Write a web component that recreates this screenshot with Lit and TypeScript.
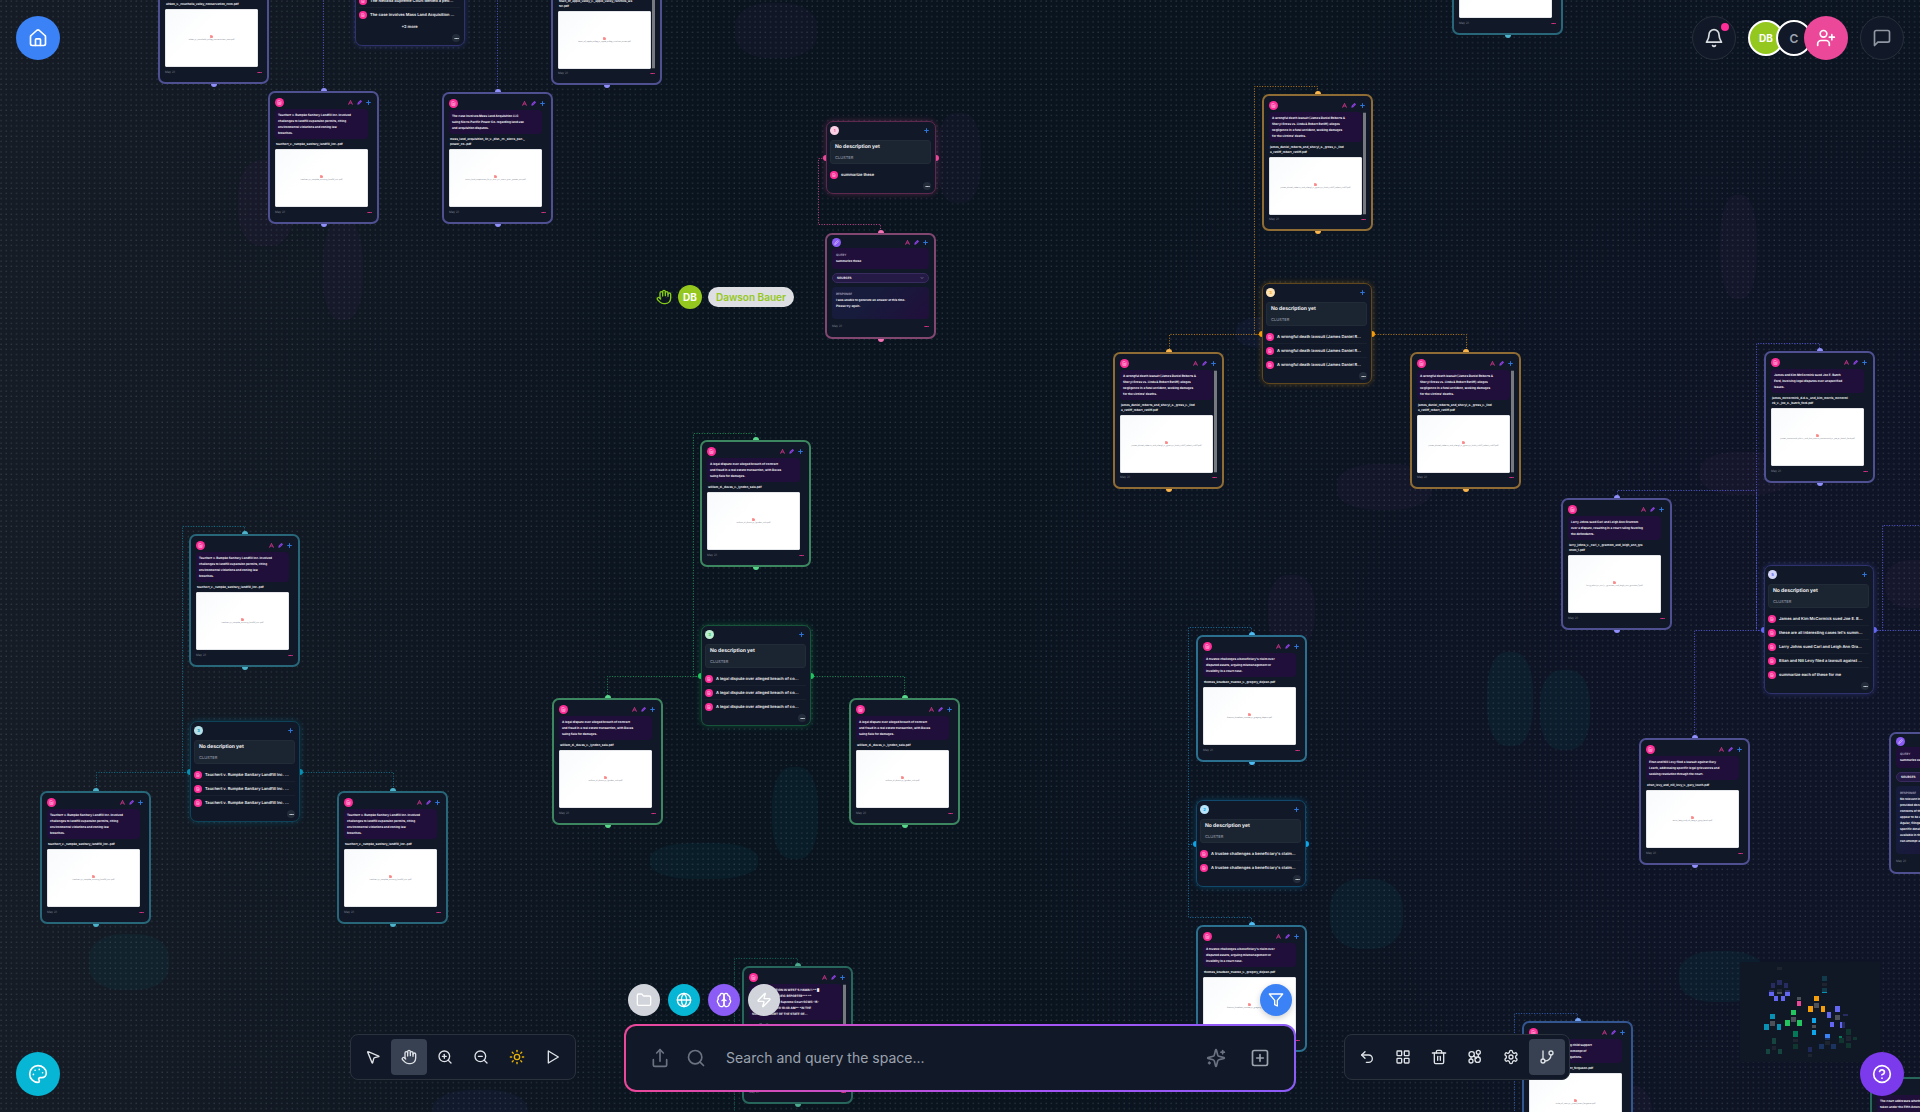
import { LitElement, html, svg, css, nothing } from "lit";
import { customElement, property } from "lit/decorators.js";
import { styleMap } from "lit/directives/style-map.js";
import { classMap } from "lit/directives/class-map.js";

const ICONS: Record<string, string[]> = {
  home: [
    "M15 21v-7a1 1 0 0 0-1-1h-4a1 1 0 0 0-1 1v7",
    "M3 10.5a2 2 0 0 1 .7-1.5l7-6.3a2 2 0 0 1 2.6 0l7 6.3a2 2 0 0 1 .7 1.5V19a2 2 0 0 1-2 2H5a2 2 0 0 1-2-2z",
  ],
  bell: [
    "M10.3 21a1.94 1.94 0 0 0 3.4 0",
    "M6 8a6 6 0 0 1 12 0c0 4.5 1.4 6.4 3 9H3c1.6-2.6 3-4.5 3-9",
  ],
  chat: ["M21 15a2 2 0 0 1-2 2H7l-4 4V5a2 2 0 0 1 2-2h14a2 2 0 0 1 2 2z"],
  userPlus: [
    "M16 21v-2a4 4 0 0 0-4-4H6a4 4 0 0 0-4 4v2",
    "M5 7a4 4 0 1 0 8 0a4 4 0 1 0-8 0",
    "M19 8v6",
    "M22 11h-6",
  ],
  palette: [
    "M12 2C6.5 2 2 6.5 2 12s4.5 10 10 10c.926 0 1.648-.746 1.648-1.688 0-.437-.18-.835-.437-1.125-.29-.289-.438-.652-.438-1.125a1.64 1.64 0 0 1 1.668-1.668h1.996c3.051 0 5.555-2.503 5.555-5.554C21.965 6.012 17.461 2 12 2z",
    "M13.5 6.5h.01",
    "M17.5 10.5h.01",
    "M8.5 7.5h.01",
    "M6.5 12.5h.01",
  ],
  help: [
    "M2 12a10 10 0 1 0 20 0a10 10 0 1 0-20 0",
    "M9.09 9a3 3 0 0 1 5.83 1c0 2-3 3-3 3",
    "M12 17h.01",
  ],
  cursor: [
    "M4.037 4.688a.495.495 0 0 1 .651-.651l16 6.5a.5.5 0 0 1-.063.947l-6.124 1.58a2 2 0 0 0-1.438 1.435l-1.579 6.126a.5.5 0 0 1-.947.063z",
  ],
  hand: [
    "M18 11V6a2 2 0 0 0-2-2a2 2 0 0 0-2 2",
    "M14 10V4a2 2 0 0 0-2-2a2 2 0 0 0-2 2v2",
    "M10 10.5V6a2 2 0 0 0-2-2a2 2 0 0 0-2 2v8",
    "M18 8a2 2 0 1 1 4 0v6a8 8 0 0 1-8 8h-2c-2.8 0-4.5-.86-5.99-2.34l-3.6-3.6a2 2 0 0 1 2.83-2.82L7 15",
  ],
  zoomIn: ["M3 11a8 8 0 1 0 16 0a8 8 0 1 0-16 0", "M21 21l-4.35-4.35", "M11 8v6", "M8 11h6"],
  zoomOut: ["M3 11a8 8 0 1 0 16 0a8 8 0 1 0-16 0", "M21 21l-4.35-4.35", "M8 11h6"],
  search: ["M3 11a8 8 0 1 0 16 0a8 8 0 1 0-16 0", "M21 21l-4.35-4.35"],
  sun: [
    "M8 12a4 4 0 1 0 8 0a4 4 0 1 0-8 0",
    "M12 2v2", "M12 20v2", "M4.93 4.93l1.41 1.41", "M17.66 17.66l1.41 1.41",
    "M2 12h2", "M20 12h2", "M6.34 17.66l-1.41 1.41", "M19.07 4.93l-1.41 1.41",
  ],
  play: ["M5 3l15 9-15 9z"],
  folder: ["M20 20a2 2 0 0 0 2-2V8a2 2 0 0 0-2-2h-7.9a2 2 0 0 1-1.69-.9L9.6 3.9A2 2 0 0 0 7.93 3H4a2 2 0 0 0-2 2v13a2 2 0 0 0 2 2z"],
  globe: [
    "M2 12a10 10 0 1 0 20 0a10 10 0 1 0-20 0",
    "M12 2a14.5 14.5 0 0 0 0 20 14.5 14.5 0 0 0 0-20",
    "M2 12h20",
  ],
  brain: [
    "M12 5a3 3 0 1 0-5.997.125 4 4 0 0 0-2.526 5.77 4 4 0 0 0 .556 6.588A4 4 0 1 0 12 18Z",
    "M12 5a3 3 0 1 1 5.997.125 4 4 0 0 1 2.526 5.77 4 4 0 0 1-.556 6.588A4 4 0 1 1 12 18Z",
    "M15 13a4.5 4.5 0 0 1-3-4 4.5 4.5 0 0 1-3 4",
  ],
  zap: ["M4 14a1 1 0 0 1-.78-1.63l9.9-10.2a.5.5 0 0 1 .86.46l-1.92 6.02A1 1 0 0 0 13 10h7a1 1 0 0 1 .78 1.63l-9.9 10.2a.5.5 0 0 1-.86-.46l1.92-6.02A1 1 0 0 0 11 14z"],
  filter: ["M22 3H2l8 9.46V19l4 2v-8.54z"],
  upload: ["M4 14v6a2 2 0 0 0 2 2h12a2 2 0 0 0 2-2v-6", "M16 6l-4-4-4 4", "M12 2v14"],
  sparkles: [
    "M9.94 15.5A2 2 0 0 0 8.5 14.06l-6.14-1.58a.5.5 0 0 1 0-.96L8.5 9.94A2 2 0 0 0 9.94 8.5l1.58-6.14a.5.5 0 0 1 .96 0L14.06 8.5A2 2 0 0 0 15.5 9.94l6.14 1.58a.5.5 0 0 1 0 .96L15.5 14.06a2 2 0 0 0-1.44 1.44l-1.58 6.14a.5.5 0 0 1-.96 0z",
    "M20 3v4", "M22 5h-4", "M4 17v2", "M5 18H3",
  ],
  squarePlus: ["M5 3h14a2 2 0 0 1 2 2v14a2 2 0 0 1-2 2H5a2 2 0 0 1-2-2V5a2 2 0 0 1 2-2z", "M8 12h8", "M12 8v8"],
  undo: ["M9 14L4 9l5-5", "M4 9h10.5a5.5 5.5 0 0 1 0 11H11"],
  grid: [
    "M4 3h5a1 1 0 0 1 1 1v5a1 1 0 0 1-1 1H4a1 1 0 0 1-1-1V4a1 1 0 0 1 1-1z",
    "M15 3h5a1 1 0 0 1 1 1v5a1 1 0 0 1-1 1h-5a1 1 0 0 1-1-1V4a1 1 0 0 1 1-1z",
    "M15 14h5a1 1 0 0 1 1 1v5a1 1 0 0 1-1 1h-5a1 1 0 0 1-1-1v-5a1 1 0 0 1 1-1z",
    "M4 14h5a1 1 0 0 1 1 1v5a1 1 0 0 1-1 1H4a1 1 0 0 1-1-1v-5a1 1 0 0 1 1-1z",
  ],
  trash: ["M2 6h20", "M19 6v14a2 2 0 0 1-2 2H7a2 2 0 0 1-2-2V6", "M8 6V4a2 2 0 0 1 2-2h4a2 2 0 0 1 2 2v2", "M10 11v6", "M14 11v6"],
  groups: [
    "M3 8a4 4 0 1 0 8 0a4 4 0 1 0-8 0",
    "M14 5a3 3 0 1 0 6 0a3 3 0 1 0-6 0",
    "M3 18a3 3 0 1 0 6 0a3 3 0 1 0-6 0",
    "M12 16a4 4 0 1 0 8 0a4 4 0 1 0-8 0",
    "M10 10l4 4",
    "M17 8v4",
    "M6 12v3",
  ],
  gear: [
    "M12.22 2h-.44a2 2 0 0 0-2 2v.18a2 2 0 0 1-1 1.73l-.43.25a2 2 0 0 1-2 0l-.15-.08a2 2 0 0 0-2.73.73l-.22.38a2 2 0 0 0 .73 2.73l.15.1a2 2 0 0 1 1 1.72v.51a2 2 0 0 1-1 1.74l-.15.09a2 2 0 0 0-.73 2.73l.22.38a2 2 0 0 0 2.73.73l.15-.08a2 2 0 0 1 2 0l.43.25a2 2 0 0 1 1 1.73V20a2 2 0 0 0 2 2h.44a2 2 0 0 0 2-2v-.18a2 2 0 0 1 1-1.73l.43-.25a2 2 0 0 1 2 0l.15.08a2 2 0 0 0 2.73-.73l.22-.39a2 2 0 0 0-.73-2.73l-.15-.08a2 2 0 0 1-1-1.74v-.5a2 2 0 0 1 1-1.74l.15-.09a2 2 0 0 0 .73-2.73l-.22-.38a2 2 0 0 0-2.73-.73l-.15.08a2 2 0 0 1-2 0l-.43-.25a2 2 0 0 1-1-1.73V4a2 2 0 0 0-2-2z",
    "M9 12a3 3 0 1 0 6 0a3 3 0 1 0-6 0",
  ],
  branch: ["M6 3v12", "M15 6a3 3 0 1 0 6 0a3 3 0 1 0-6 0", "M3 18a3 3 0 1 0 6 0a3 3 0 1 0-6 0", "M18 9a9 9 0 0 1-9 9"],
  alert: ["M12 3l9 17", "M12 3L3 20", "M7 14h10"],
  pencil: ["M4 20l2-6L17 3l4 4L10 18z"],
  plus: ["M12 3v18", "M3 12h18"],
  chevron: ["M6 9l6 6 6-6"],
  file: ["M6 3h9l4 4v14H6z", "M9 12h6", "M9 16h6"],
  dots: ["M4 12h3", "M11 12h3", "M18 12h3"],
};

const icon = (name: string, size: number, width = 2) => html`<svg
  width=${size} height=${size} viewBox="0 0 24 24" fill="none" stroke="currentColor"
  stroke-width=${width} stroke-linecap="round" stroke-linejoin="round" aria-hidden="true"
>${ICONS[name].map((d) => svg`<path d=${d}></path>`)}</svg>`;

type Hue = "indigo" | "pink" | "amber" | "teal" | "green" | "sky" | "emerald" | "blue";

/* edge: card outline, dot: handle, line: connector, solid: cluster handle, pale: cluster badge */
const HUES: Record<Hue, { edge: string; dot: string; line: string; solid: string; pale: string }> = {
  indigo: { edge: "#4f5092", dot: "#8f90fb", line: "#5256d0", solid: "#6366f1", pale: "#d4d5fb" },
  pink: { edge: "#824771", dot: "#f472b6", line: "#c24789", solid: "#ec4899", pale: "#fad0e4" },
  amber: { edge: "#8f6c33", dot: "#fbb54a", line: "#b67b1e", solid: "#f59e0b", pale: "#fde3b6" },
  teal: { edge: "#286779", dot: "#4cb3cb", line: "#147089", solid: "#0891b2", pale: "#b5e0ea" },
  green: { edge: "#3c875f", dot: "#58d88a", line: "#1f8a50", solid: "#22c55e", pale: "#bcefcf" },
  sky: { edge: "#2c708f", dot: "#4dbef5", line: "#1b75a4", solid: "#0ea5e9", pale: "#b7e4f9" },
  emerald: { edge: "#27665a", dot: "#4ba88b", line: "#116755", solid: "#059669", pale: "#b5e3d3" },
  blue: { edge: "#345690", dot: "#76a5f8", line: "#305db0", solid: "#3b82f6", pale: "#c4dafc" },
};

const hueStyle = (h: Hue) => ({
  "--edge": HUES[h].edge,
  "--dot": HUES[h].dot,
  "--solid": HUES[h].solid,
  "--pale": HUES[h].pale,
});

const nodeBase = css`
  :host {
    display: block;
    font-family: Inter, "Liberation Sans", sans-serif;
    color: #f3f4f6;
    text-rendering: geometricPrecision;
  }
  * { box-sizing: border-box; }
  svg { display: block; }
  .frame { position: relative; }
  .card {
    position: relative;
    border: 2px solid var(--edge);
    border-radius: 7px;
    background: #111827;
  }
  .handle {
    position: absolute;
    left: 50%;
    width: 6px;
    height: 6px;
    margin-left: -3px;
    border-radius: 50%;
    background: var(--dot);
  }
  .handle.top { top: -3px; }
  .handle.bottom { bottom: -3px; }
  header { display: flex; align-items: center; height: 10px; gap: 4px; }
  .badge {
    display: grid;
    place-items: center;
    width: 9px;
    height: 9px;
    border-radius: 50%;
    background: #ff2d97;
    color: #ffc4e2;
    margin-right: auto;
  }
  .badge.query { background: #8b5cf6; color: #e6dcff; }
  .alert { color: #b0307c; }
  .edit { color: #8b3fe0; }
  .add { color: #2f74d8; padding-right: 1px; }
  footer {
    display: flex;
    justify-content: space-between;
    align-items: center;
    height: 5px;
    font-size: 3px;
    line-height: 5px;
    color: #7b8190;
  }
  footer .more { color: #e0338b; }
`;

const cardTools = html`<span class="alert">${icon("alert", 5, 5)}</span>
  <span class="edit">${icon("pencil", 5, 5)}</span>
  <span class="add">${icon("plus", 5, 5)}</span>`;

interface FileNode { x: number; y: number; hue: Hue; summary: string[]; file: string[]; scroll?: boolean }

@customElement("file-node")
class FileNodeElement extends LitElement {
  @property({ attribute: false }) node!: FileNode;

  static styles = [nodeBase, css`
    .card { width: 111px; padding: 4px 5px 7px; }
    .body { display: flex; margin-top: 2px; }
    .content { flex: 1; min-width: 0; margin-right: 4px; }
    .scroll .content { margin-right: 1px; }
    .track { width: 3px; background: #2f3540; padding: 1px 0; }
    .thumb { height: 100%; background: #767980; }
    .summary {
      padding: 3px;
      border-radius: 4px;
      background: #210f3b;
      font-size: 3px;
      line-height: 6px;
      font-weight: 700;
      white-space: nowrap;
      overflow: hidden;
    }
    .summary div { min-height: 6px; }
    .name {
      margin: 3px 1px 2px;
      font-size: 3px;
      line-height: 5px;
      font-weight: 700;
      white-space: nowrap;
    }
    .name div { min-height: 5px; }
    .preview {
      height: 58px;
      border-radius: 1px;
      background: linear-gradient(135deg, #f8fafc, #ffffff 40%);
      border: 1px solid #e5e7eb;
      display: flex;
      flex-direction: column;
      align-items: center;
      justify-content: center;
      color: #6b7280;
      font-size: 2px;
      line-height: 4px;
      white-space: nowrap;
    }
    .preview .doc { color: #f87171; }
    footer { margin-top: 3px; }
    .scroll footer { margin-top: 2px; }
  `];

  render() {
    const n = this.node;
    return html`
      <div class="frame" style=${styleMap(hueStyle(n.hue))}>
        <i class="handle top"></i><i class="handle bottom"></i>
        <article class=${classMap({ card: true, scroll: !!n.scroll })}>
          <header><span class="badge">${icon("file", 5, 3)}</span>${cardTools}</header>
          <div class="body">
            <div class="content">
              <div class="summary">${n.summary.map((l) => html`<div>${l}</div>`)}</div>
              <div class="name">${n.file.map((l) => html`<div>${l}</div>`)}</div>
              <div class="preview"><span class="doc">${icon("file", 3, 6)}</span><span>${n.file.join("")}</span></div>
            </div>
            ${n.scroll ? html`<div class="track"><div class="thumb"></div></div>` : nothing}
          </div>
          <footer><time>May 21</time><span class="more">${icon("dots", 5, 5)}</span></footer>
        </article>
      </div>`;
  }
}

interface ClusterNode { x: number; y: number; hue: Hue; rows: string[]; more?: string }

@customElement("cluster-node")
class ClusterNodeElement extends LitElement {
  @property({ attribute: false }) node!: ClusterNode;

  static styles = [nodeBase, css`
    .card {
      width: 110px;
      padding: 3px 4px 2px 3px;
      border: 1px solid color-mix(in srgb, var(--solid) 35%, #111827);
      box-shadow: 0 0 6px color-mix(in srgb, var(--solid) 30%, transparent);
    }
    .handle { background: var(--solid); top: 50%; margin: -3px 0 0; }
    .handle.left { left: -3px; }
    .handle.right { left: auto; right: -3px; }
    header { padding-right: 1px; }
    .badge { width: 9px; height: 9px; background: var(--pale); color: var(--solid); font-size: 4px; font-weight: 700; }
    .about {
      height: 24px;
      margin: 5px 0 3px;
      padding: 2px 4px;
      border: 1px solid #222c39;
      border-radius: 3px;
      background: #1b2431;
      font-size: 5px;
      line-height: 8px;
      font-weight: 700;
    }
    .kind { margin-top: 3px; font-size: 4px; font-weight: 500; color: #8b93a1; }
    ul { list-style: none; margin: 0; padding: 0; }
    li {
      display: flex;
      align-items: center;
      gap: 3px;
      height: 14px;
      border-top: 1px solid #19212f;
      font-size: 4px;
      line-height: 8px;
      font-weight: 600;
      white-space: nowrap;
    }
    li:first-child { border-top-color: transparent; }
    li .badge { width: 8px; height: 8px; margin: 0; flex: none; background: #ff2d97; color: #ffc4e2; }
    .rest { height: 12px; line-height: 12px; text-align: center; font-size: 4px; font-weight: 600; }
    footer { height: 10px; justify-content: flex-end; }
    footer .more {
      display: grid;
      place-items: center;
      width: 8px;
      height: 8px;
      border-radius: 50%;
      background: #222c3a;
      color: #e5e7eb;
    }
  `];

  render() {
    const n = this.node;
    return html`
      <div class="frame" style=${styleMap(hueStyle(n.hue))}>
        <i class="handle left"></i><i class="handle right"></i>
        <article class="card">
          <header><span class="badge">${n.rows.length}</span><span class="add">${icon("plus", 5, 5)}</span></header>
          <div class="about"><div>No description yet</div><div class="kind">CLUSTER</div></div>
          <ul>${n.rows.map((r) => html`<li><span class="badge">${icon("file", 4, 3)}</span><span>${r}</span></li>`)}</ul>
          ${n.more ? html`<div class="rest">${n.more}</div>` : nothing}
          <footer><span class="more">${icon("dots", 5, 4)}</span></footer>
        </article>
      </div>`;
  }
}

interface QueryNode { x: number; y: number; hue: Hue; query: string; response: string[] }

@customElement("query-node")
class QueryNodeElement extends LitElement {
  @property({ attribute: false }) node!: QueryNode;

  static styles = [nodeBase, css`
    .card { width: 111px; padding: 2px 5px 8px; }
    .block {
      padding: 4px;
      border-radius: 4px;
      background: #210f3b;
      font-size: 3px;
      line-height: 6px;
      font-weight: 700;
      white-space: nowrap;
      overflow: hidden;
    }
    .block.query { margin-top: 1px; padding-bottom: 5px; }
    .label { color: #a9a3bd; font-weight: 600; }
    .sources {
      display: flex;
      align-items: center;
      justify-content: space-between;
      height: 10px;
      margin: 4px 0;
      padding: 0 4px;
      border: 1px solid #382b5e;
      border-radius: 5px;
      background: #241a45;
      font-size: 3px;
      line-height: 8px;
      font-weight: 700;
    }
    .block.response { padding-bottom: 10px; background: linear-gradient(135deg, #171b3c 40%, #210f3b); }
    footer { margin-top: 5px; }
  `];

  render() {
    const n = this.node;
    return html`
      <div class="frame" style=${styleMap(hueStyle(n.hue))}>
        <i class="handle top"></i><i class="handle bottom"></i>
        <article class="card">
          <header><span class="badge query">${icon("pencil", 5, 3)}</span>${cardTools}</header>
          <div class="block query"><div class="label">QUERY</div><div>${n.query}</div></div>
          <div class="sources"><span>SOURCES</span>${icon("chevron", 4, 2)}</div>
          <div class="block response"><div class="label">RESPONSE</div>${n.response.map((l) => html`<div>${l}</div>`)}</div>
          <footer><time>May 21</time><span class="more">${icon("dots", 5, 5)}</span></footer>
        </article>
      </div>`;
  }
}

const TAUCHERT = ["Tauchert v. Rumpke Sanitary Landfill Inc. involved", "challenges to landfill expansion permits, citing", "environmental violations and zoning law", "breaches."];
const TAUCHERT_FILE = ["tauchert_v._rumpke_sanitary_landfill_inc..pdf"];
const ROBERTS = ["A wrongful death lawsuit (James Daniel Roberts &", "Sheryl Gross vs. Linda & Robert Ratliff) alleges", "negligence in a fatal accident, seeking damages", "for the victims' deaths."];
const ROBERTS_FILE = ["james_daniel_roberts_and_sheryl_a._gross_v._lind", "a_ratliff_robert_ratliff.pdf"];
const DAVAS = ["A legal dispute over alleged breach of contract", "and fraud in a real estate transaction, with Davas", "suing Sala for damages."];
const DAVAS_FILE = ["william_d._davas_v._lyndon_sala.pdf"];
const TRUSTEE = ["A trustee challenges a beneficiary's claim over", "disputed assets, arguing mismanagement or", "invalidity in a court case."];
const TRUSTEE_FILE = ["thomas_knudsen_trustee_v._gregory_dejean.pdf"];

const FILES: FileNode[] = [
  { x: 158, y: -43, hue: "indigo", summary: ["", "", ""], file: ["aitken_v._coachella_valley_conservation_com.pdf"] },
  { x: 551, y: -52, hue: "indigo", summary: ["", "", "", ""], file: ["town_of_apple_valley_v._apple_valley_ranchos_wa", "ter.pdf"], scroll: true },
  { x: 268, y: 91, hue: "indigo", summary: TAUCHERT, file: TAUCHERT_FILE },
  { x: 442, y: 92, hue: "indigo", summary: ["The case involves Mass Land Acquisition LLC", "suing Sierra Pacific Power Co. regarding land use", "and acquisition disputes."], file: ["mass_land_acquisition_llc_v._dist._ct._sierra_pac._", "power_co..pdf"] },
  { x: 1452, y: -92, hue: "teal", summary: ["", "", ""], file: [""] },
  { x: 1262, y: 94, hue: "amber", summary: ROBERTS, file: ROBERTS_FILE, scroll: true },
  { x: 1113, y: 352, hue: "amber", summary: ROBERTS, file: ROBERTS_FILE, scroll: true },
  { x: 1410, y: 352, hue: "amber", summary: ROBERTS, file: ROBERTS_FILE, scroll: true },
  { x: 1764, y: 351, hue: "indigo", summary: ["James and Kim McCormick sued Joe E. Butch", "Ford, involving legal disputes over unspecified", "issues."], file: ["james_mccormick_d.d.s._and_kim_morris_mccormi", "ck_v._joe_e._butch_ford.pdf"] },
  { x: 1561, y: 498, hue: "indigo", summary: ["Larry Johns sued Carl and Leigh Ann Grantom", "over a dispute, resulting in a court ruling favoring", "the defendants."], file: ["larry_johns_v._carl_r._grantom_and_leigh_ann_gra", "ntom_1.pdf"] },
  { x: 1639, y: 738, hue: "indigo", summary: ["Eitan and Nili Levy filed a lawsuit against Gary", "Leach, addressing specific legal grievances and", "seeking resolution through the court."], file: ["eitan_levy_and_nili_levy_v._gary_leach.pdf"] },
  { x: 189, y: 534, hue: "teal", summary: TAUCHERT, file: TAUCHERT_FILE },
  { x: 40, y: 791, hue: "teal", summary: TAUCHERT, file: TAUCHERT_FILE },
  { x: 337, y: 791, hue: "teal", summary: TAUCHERT, file: TAUCHERT_FILE },
  { x: 700, y: 440, hue: "green", summary: DAVAS, file: DAVAS_FILE },
  { x: 552, y: 698, hue: "green", summary: DAVAS, file: DAVAS_FILE },
  { x: 849, y: 698, hue: "green", summary: DAVAS, file: DAVAS_FILE },
  { x: 1196, y: 635, hue: "sky", summary: TRUSTEE, file: TRUSTEE_FILE },
  { x: 1196, y: 925, hue: "sky", summary: TRUSTEE, file: TRUSTEE_FILE },
  { x: 742, y: 966, hue: "emerald", summary: ["** FOR PUBLICATION IN WEST'S HAWAI'I ** █", "REPORTS AND PACIFIC REPORTER*** **", "Electronically Filed Supreme Court SCWC-15-", "0000 31-JAN-2020 10:48 AM** *IN THE", "SUPREME COURT OF THE STATE OF..."], file: ["scwc_15.pdf"], scroll: true },
  { x: 1522, y: 1021, hue: "blue", summary: ["A case on a father violating child support", "orders, nonpayment and contempt of", "court, enforcement of obligations."], file: ["state_of_iowa_v._jared_brent_ferguson.pdf"] },
  { x: 1870, y: 1077, hue: "emerald", summary: ["The court addresses whether property was", "taken under the Fifth Amendment", ""], file: [""] },
];

const repeat3 = (s: string) => [s, s, s];
const CLUSTERS: ClusterNode[] = [
  { x: 355, y: -95, hue: "indigo", rows: ["", "", "", "The Nevada Supreme Court denied a peti...", "The case involves Mass Land Acquisition ..."], more: "+2 more" },
  { x: 826, y: 121, hue: "pink", rows: ["summarize these"] },
  { x: 1262, y: 283, hue: "amber", rows: repeat3("A wrongful death lawsuit (James Daniel R...") },
  { x: 1764, y: 565, hue: "indigo", rows: ["James and Kim McCormick sued Joe E. B...", "these are all interesting cases let's summ...", "Larry Johns sued Carl and Leigh Ann Gra...", "Eitan and Nili Levy filed a lawsuit against ...", "summarize each of these for me"] },
  { x: 190, y: 721, hue: "teal", rows: repeat3("Tauchert v. Rumpke Sanitary Landfill Inc. ...") },
  { x: 701, y: 625, hue: "green", rows: repeat3("A legal dispute over alleged breach of co...") },
  { x: 1196, y: 800, hue: "sky", rows: ["A trustee challenges a beneficiary's claim...", "A trustee challenges a beneficiary's claim..."] },
];

const QUERIES: QueryNode[] = [
  { x: 825, y: 233, hue: "pink", query: "summarize these", response: ["I was unable to generate an answer at this time.", "Please try again."] },
  { x: 1889, y: 732, hue: "indigo", query: "summarize each of these for me", response: ["No relevant information was found in the", "provided documents. The", "contents of the files do not", "appear to be about Johns,", "Aguiar, filings or the", "specific details. If more is", "available in the space, I", "can attempt again."] },
];

const LINKS: [Hue, string][] = [
  ["indigo", "M323 0V90"], ["indigo", "M497 0V91"],
  ["pink", "M827 158H818V224H880V232"],
  ["amber", "M1317 94V86H1254V334H1262"], ["amber", "M1262 334H1169V351"], ["amber", "M1372 334H1466V351"],
  ["indigo", "M1819 350V343H1756V630H1764"], ["indigo", "M1617 497V490H1756V630"],
  ["indigo", "M1764 630H1694V738"], ["indigo", "M1874 630H1920"], ["indigo", "M1874 630H1882V525H1920"],
  ["teal", "M244 533V526H182V772H190"], ["teal", "M190 772H96V791"], ["teal", "M300 772H393V791"],
  ["green", "M755 440V433H693V676H701"], ["green", "M701 676H607V697"], ["green", "M811 676H904V697"],
  ["sky", "M1251 634V627H1188V917H1251V925"], ["sky", "M1188 844H1196"],
  ["emerald", "M797 965V958H734V1112"], ["blue", "M1577 1020V1013H1514V1112"],
];

/* soft shapes behind the canvas: x, y, width, height, tint */
const BLOBS: [number, number, number, number, string][] = [
  [735, 3, 82, 55, "violet"], [323, 220, 40, 100, "violet"], [238, 160, 56, 86, "violet"],
  [937, 113, 44, 90, "violet"], [1720, 195, 37, 104, "violet"], [1337, 464, 95, 46, "violet"],
  [1268, 575, 47, 72, "violet"], [1700, 452, 90, 43, "violet"], [1885, 560, 60, 48, "violet"],
  [1236, 317, 60, 31, "navy"], [432, 1090, 96, 50, "navy"], [1600, 1085, 52, 60, "violet"],
  [1330, 879, 73, 70, "cyan"], [1487, 652, 46, 94, "cyan"], [1540, 670, 50, 80, "cyan"],
  [772, 767, 46, 92, "cyan"], [650, 843, 108, 36, "cyan"], [89, 934, 80, 56, "cyan"], [1679, 951, 86, 51, "cyan"],
];

const INDIGO = "#6366f1", NAVY = "#272c60", GRAY = "#4d5159", COAL = "#1f2530", AMBER = "#f59e0b";
const CYAN = "#0891b2", GREEN = "#22c55e", SKY = "#0ea5e9", PINE = "#11352f", DEEP = "#1b335f", LAGOON = "#113a4b";
const MAP: [number, number, number, number, string][] = [
  [37, 5, 5, 3, COAL], [31, 21, 4, 5, NAVY], [37, 18, 5, 5, NAVY], [44, 21, 4, 5, NAVY],
  [29, 28, 5, 2, NAVY], [29, 30, 5, 4, INDIGO], [37, 27, 5, 3, COAL], [37, 30, 5, 2, GRAY],
  [45, 28, 5, 2, NAVY], [45, 30, 5, 4, INDIGO], [34, 34, 4, 5, INDIGO], [41, 34, 4, 5, INDIGO],
  [82, 14, 5, 5, LAGOON], [82, 21, 5, 3, COAL], [82, 26, 5, 4, LAGOON], [82, 30, 5, 1, CYAN],
  [57, 35, 4, 3, GRAY], [57, 39, 4, 5, "#ec4899"], [74, 34, 5, 5, AMBER], [74, 41, 5, 5, GRAY],
  [68, 44, 5, 6, AMBER], [81, 44, 4, 6, AMBER], [95, 44, 5, 6, INDIGO], [87, 50, 4, 6, INDIGO],
  [95, 53, 5, 5, GRAY], [103, 52, 5, 2, NAVY], [90, 60, 4, 5, INDIGO], [100, 60, 5, 6, NAVY], [100, 60, 2, 6, INDIGO],
  [51, 48, 5, 5, GREEN], [51, 55, 5, 5, GRAY], [45, 58, 5, 6, GREEN], [57, 58, 5, 6, GREEN],
  [30, 52, 5, 5, CYAN], [30, 59, 5, 5, GRAY], [24, 62, 5, 6, CYAN], [37, 62, 4, 6, CYAN],
  [72, 56, 4, 5, SKY], [72, 63, 4, 3, GRAY], [72, 68, 4, 5, SKY], [53, 69, 5, 6, "#047857"],
  [53, 77, 5, 3, COAL], [53, 82, 5, 5, PINE], [85, 72, 5, 4, "#3b82f6"], [85, 76, 5, 2, DEEP],
  [85, 79, 5, 4, COAL], [79, 82, 5, 5, DEEP], [91, 82, 5, 5, DEEP], [99, 74, 3, 2, "#047857"], [99, 76, 5, 5, PINE],
  [106, 67, 5, 6, PINE], [106, 74, 5, 5, COAL], [113, 75, 4, 3, PINE], [106, 81, 5, 5, PINE],
  [32, 76, 4, 6, "#164540"], [32, 84, 4, 4, COAL], [26, 87, 4, 5, "#164540"], [38, 87, 4, 5, "#164540"],
  [68, 85, 4, 5, "#20295c"], [68, 92, 4, 3, COAL],
];

const at = (n: { x: number; y: number }) => styleMap({ left: `${n.x}px`, top: `${n.y}px` });

@customElement("app-root")
class AppRoot extends LitElement {
  static styles = css`
    :host {
      display: flex;
      flex-direction: column;
      justify-content: space-between;
      position: relative;
      height: 100vh;
      overflow: hidden;
      box-sizing: border-box;
      font-family: Inter, "Liberation Sans", sans-serif;
      color: #e5e7eb;
      background:
        linear-gradient(90deg, rgba(30, 33, 42, 0.6), transparent 36%),
        radial-gradient(circle at 100% 65%, rgba(26, 20, 54, 0.4), transparent 45%),
        #0a141f;
    }
    * { box-sizing: border-box; }
    svg { display: block; }
    button, input { font: inherit; color: inherit; }
    button { border: 0; padding: 0; background: none; display: grid; place-items: center; flex: none; }

    .space { position: absolute; inset: 0; overflow: hidden; }
    .dots, .links { position: absolute; inset: 0; width: 100%; height: 100%; }
    .blob { position: absolute; border-radius: 40%; }
    .blob.violet { background: rgba(70, 36, 92, 0.13); }
    .blob.cyan { background: rgba(10, 82, 96, 0.15); }
    .blob.navy { background: rgba(34, 42, 92, 0.18); }
    .node { position: absolute; }

    .presence { position: absolute; left: 656px; top: 285px; display: flex; align-items: center; gap: 6px; color: #84cc16; }
    .presence .who {
      display: grid;
      place-items: center;
      width: 24px;
      height: 24px;
      border-radius: 50%;
      background: #94c81e;
      color: #fff;
      font-size: 10px;
      font-weight: 700;
    }
    .presence .name {
      height: 20px;
      padding: 0 8px;
      border-radius: 10px;
      background: #dedfe2;
      color: #94c81e;
      font-size: 10px;
      line-height: 20px;
      font-weight: 600;
    }

    .bar { position: relative; display: flex; justify-content: space-between; align-items: center; padding: 16px; }
    .round { width: 44px; height: 44px; border-radius: 50%; color: #fff; }
    .home { background: #3b82f6; }
    .team { display: flex; align-items: center; }
    .outline { border: 1px solid #282f3b; background: #111827; color: #d8dbe0; position: relative; }
    .outline.chat { margin-left: 12px; color: #9197a3; }
    .ping { position: absolute; right: 6px; top: 6px; width: 8px; height: 8px; border-radius: 50%; background: #ff2d97; }
    .person {
      display: grid;
      place-items: center;
      width: 36px;
      height: 36px;
      border: 2px solid #fff;
      border-radius: 50%;
      background: #94c81e;
      color: #fff;
      font-size: 10px;
      font-weight: 700;
      margin-left: 12px;
    }
    .person.dark { margin-left: -8px; background: #111827; color: #9ca3af; font-size: 12px; font-weight: 600; }
    .invite { margin-left: -8px; background: #ec4899; position: relative; }

    .dock { position: relative; display: grid; grid-template-columns: 1fr auto 1fr; align-items: end; padding: 0 16px 16px; }
    .palette { background: #06b6d4; }
    .help { background: #7c3aed; justify-self: end; position: relative; }
    .center { display: flex; align-items: flex-end; gap: 48px; margin-bottom: 4px; }
    .tools {
      display: flex;
      padding: 4px;
      margin-bottom: 12px;
      border: 1px solid #2b323e;
      border-radius: 8px;
      background: #111827;
    }
    .tools button { width: 36px; height: 36px; border-radius: 4px; color: #dfe2e6; }
    .tools button.on { background: #374151; }
    .tools button.sun { color: #eab308; }
    .ask { width: 35vw; }
    .chips { display: flex; gap: 8px; padding: 0 4px 8px; }
    .chips button { width: 32px; height: 32px; border-radius: 50%; background: #d1d5db; color: #fff; }
    .chips .web { background: #06b6d4; }
    .chips .mind { background: #8b5cf6; }
    .chips .filter { background: #3b82f6; margin-left: auto; box-shadow: 0 2px 6px rgba(0, 0, 0, 0.2); }
    .search {
      display: flex;
      align-items: center;
      gap: 16px;
      height: 68px;
      padding: 0 24px;
      border: 2px solid transparent;
      border-radius: 12px;
      background:
        linear-gradient(#111827, #111827) padding-box,
        linear-gradient(90deg, #ec4899, #a855f7 60%, #8b5cf6) border-box;
      color: #6b7280;
    }
    .search input {
      flex: 1;
      min-width: 0;
      border: 0;
      padding: 0 0 0 4px;
      outline: 0;
      background: none;
      font-size: 14px;
      line-height: 20px;
      color: #9ca3af;
    }
    .search input::placeholder { color: #9ca3af; opacity: 1; }
    .search .new { margin-left: 8px; color: #9ca3af; }

    .map { position: absolute; right: 40px; bottom: 50px; width: 140px; height: 100px; background: #111825; }
  `;

  private tool(name: string, label: string, cls = "") {
    return html`<button class=${cls} aria-label=${label}>${icon(name, 16)}</button>`;
  }

  render() {
    return html`
      <div class="space">
        ${BLOBS.map(([x, y, w, h, tint]) => html`<div class="blob ${tint}" style=${styleMap({ left: `${x}px`, top: `${y}px`, width: `${w}px`, height: `${h}px` })}></div>`)}
        <svg class="dots" aria-hidden="true">
          <defs>
            <pattern id="dot" width="5.2" height="5.2" patternUnits="userSpaceOnUse">
              <circle cx="1" cy="1" r="0.5" fill="#5a6674" fill-opacity="0.75"></circle>
            </pattern>
          </defs>
          <rect width="100%" height="100%" fill="url(#dot)"></rect>
        </svg>
        <svg class="links" aria-hidden="true">
          ${LINKS.map(([h, d]) => svg`<path d=${d} fill="none" stroke=${HUES[h].line} stroke-width="1" stroke-dasharray="1 1.6" transform="translate(.5 .5)"></path>`)}
        </svg>
        ${CLUSTERS.map((n) => html`<cluster-node class="node" style=${at(n)} .node=${n}></cluster-node>`)}
        ${FILES.map((n) => html`<file-node class="node" style=${at(n)} .node=${n}></file-node>`)}
        ${QUERIES.map((n) => html`<query-node class="node" style=${at(n)} .node=${n}></query-node>`)}
        <div class="presence">${icon("hand", 16)}<span class="who">DB</span><span class="name">Dawson Bauer</span></div>
        <svg class="map" viewBox="0 0 140 100" role="img" aria-label="Minimap">
          ${MAP.map(([x, y, w, h, c]) => svg`<rect x=${x} y=${y} width=${w} height=${h} fill=${c}></rect>`)}
        </svg>
      </div>

      <div class="bar">
        <button class="round home" aria-label="Home">${icon("home", 20, 2)}</button>
        <div class="team">
          <button class="round outline" aria-label="Notifications">${icon("bell", 20, 2)}<span class="ping"></span></button>
          <span class="person">DB</span>
          <span class="person dark">C</span>
          <button class="round invite" aria-label="Invite">${icon("userPlus", 20, 2)}</button>
          <button class="round outline chat" aria-label="Messages">${icon("chat", 20, 2)}</button>
        </div>
      </div>

      <div class="dock">
        <button class="round palette" aria-label="Theme">${icon("palette", 20, 2)}</button>
        <div class="center">
          <div class="tools" role="toolbar" aria-label="View">
            ${this.tool("cursor", "Select")}${this.tool("hand", "Pan", "on")}${this.tool("zoomIn", "Zoom in")}
            ${this.tool("zoomOut", "Zoom out")}${this.tool("sun", "Light mode", "sun")}${this.tool("play", "Play")}
          </div>
          <div class="ask">
            <div class="chips">
              <button aria-label="Files">${icon("folder", 16)}</button>
              <button class="web" aria-label="Web">${icon("globe", 16)}</button>
              <button class="mind" aria-label="Reasoning">${icon("brain", 16)}</button>
              <button aria-label="Quick actions">${icon("zap", 16)}</button>
              <button class="filter" aria-label="Filter">${icon("filter", 16)}</button>
            </div>
            <div class="search">
              <button aria-label="Upload">${icon("upload", 20)}</button>
              ${icon("search", 20)}
              <input type="text" aria-label="Search" placeholder="Search and query the space..." />
              <button aria-label="Enhance">${icon("sparkles", 20)}</button>
              <button class="new" aria-label="Add">${icon("squarePlus", 20)}</button>
            </div>
          </div>
          <div class="tools" role="toolbar" aria-label="Edit">
            ${this.tool("undo", "Undo")}${this.tool("grid", "Arrange")}${this.tool("trash", "Delete")}
            ${this.tool("groups", "Group")}${this.tool("gear", "Settings")}${this.tool("branch", "Connections", "on")}
          </div>
        </div>
        <button class="round help" aria-label="Help">${icon("help", 20, 2)}</button>
      </div>
    `;
  }
}
